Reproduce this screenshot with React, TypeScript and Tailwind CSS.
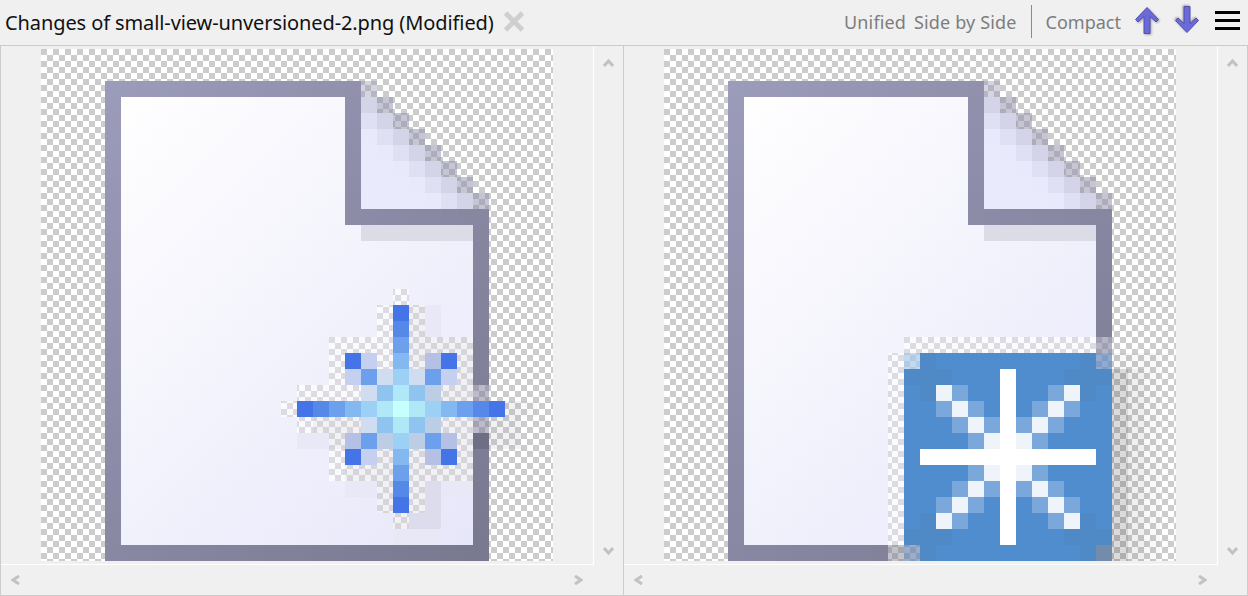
import { FC } from 'react'

type Cell = { x: number; y: number; fill: string }

const mix = (from: number[], to: number[], t: number) =>
  `rgb(${from.map((v, i) => Math.round(v + (to[i] - v) * t)).join(',')})`

// fold pixels next to the diagonal edge of the page
const foldEdge = ['#d3d4e8', '#dfe0f3']

const pageCells = () => {
  const cells: Cell[] = []
  for (let y = 2; y < 32; y++) {
    for (let x = 4; x < 28; x++) {
      const t = (x - 4 + (y - 2)) / 53
      const border = mix([155, 155, 186], [120, 120, 143], t)
      const body = mix([255, 255, 255], [230, 230, 250], t)
      if (y < 10 && x > 19) {
        const d = x - 20 - (y - 3)
        if (d === 1) cells.push({ x, y, fill: y === 2 ? 'rgba(150,150,180,.4)' : 'rgba(140,140,170,.5)' })
        else if (d === 0) cells.push({ x, y, fill: foldEdge[0] })
        else if (d === -1) cells.push({ x, y, fill: foldEdge[1] })
        else if (d === -2) cells.push({ x, y, fill: '#e8eafc' })
        else if (d < -2) cells.push({ x, y, fill: '#e9ebfd' })
        continue
      }
      if (y === 2 && x > 19) continue
      const isBorder =
        y === 2 || y === 31 || x === 4 || (x === 19 && y < 10) || (y === 10 && x >= 19) || (x === 27 && y >= 10)
      if (isBorder) cells.push({ x, y, fill: border })
      else if (y === 11 && x > 19) cells.push({ x, y, fill: '#dcdce6' })
      else cells.push({ x, y, fill: body })
    }
  }
  return cells
}

const HALO = 'rgba(245,245,255,.4)'
const HALO_DARK = 'rgba(225,225,235,.45)'
const SHADOW_DARK = 'rgba(0,0,0,.14)'
const SHADOW_MID = 'rgba(0,0,0,.06)'
const SHADOW_FAINT = 'rgba(0,0,0,.025)'

const sparklePalette: Record<string, string> = {
  a: '#c8ffff',
  b: '#b0e8f8',
  c: '#9cd0f4',
  d: '#84b8f0',
  e: '#6ca0ec',
  f: '#5688e8',
  g: '#4474e8',
  k: '#90c4f0',
  l: '#c5d0f0',
  L: '#b4c0e4',
  m: '#d0dcf0',
  M: '#bccde6',
  h: HALO,
  s: HALO_DARK,
  t: '#e8e8f6',
  T: '#dcdcec',
  D: 'rgba(120,120,150,.5)',
  B: '#6e6e86',
  u: 'rgba(170,170,185,.15)',
  v: 'rgba(170,170,185,.07)',
}

// cols 15-30, rows 15-30
const sparkleRows = [
  '.......h........',
  '......hgst......',
  '......hfst......',
  '...hhhhessss....',
  '...hglhdsLgs....',
  '...hlemcmels....',
  '.hhhhmkbkMssD...',
  'hgfedcbabcdefguv',
  '.hsssmkbkMssDuu.',
  '.ttsLeMcMeLsBuu.',
  '...hglsdsLgs....',
  '...hsssessss....',
  '....ttsfsTtt....',
  '......sgsT......',
  '.......sTT......',
  '.......ttt......',
]

const badgePalette: Record<string, string> = {
  n: '#508dce',
  o: '#4f89c6',
  w: '#ffffff',
  x: '#eef4fa',
  y: '#7aa8da',
  h: HALO,
  A: 'rgba(170,200,235,.7)',
  C: 'rgba(95,135,190,.7)',
  E: 'rgba(100,130,175,.65)',
  F: '#748cab',
  H: 'rgba(120,120,140,.45)',
  Q: 'rgba(130,130,160,.6)',
  S: SHADOW_DARK,
  R: SHADOW_MID,
  v: SHADOW_FAINT,
}

// cols 14-30, rows 18-31
const badgeRows = [
  '.hhhhhhhhhhhhQ...',
  'hAonnnnnnnnnoCvvv',
  'hooonnnwnnnoooSRv',
  'hnoxynnwnnyxonSRv',
  'hnnyxynwnyxynnSRv',
  'hnnnyxywyxynnnSRv',
  'hnnnnyxwxynnnnSRv',
  'hnwwwwwwwwwwwnSRv',
  'hnnnnyxwxynnnnSRv',
  'hnnnyxywyxynnnSRv',
  'hnnyxynwnyxynnSRv',
  'hnoxynnwnnyxonSRv',
  'hooonnnwnnnoooSRv',
  'HEonnnnnnnnnoFSRv',
]

const overlayCells = (rows: string[], palette: Record<string, string>, left: number, top: number) => {
  const cells: Cell[] = []
  rows.forEach((row, r) => {
    row.split('').forEach((ch, c) => {
      if (ch !== '.') cells.push({ x: left + c, y: top + r, fill: palette[ch] })
    })
  })
  return cells
}

const PixelIcon: FC<{ overlay: Cell[] }> = ({ overlay }) => {
  // overlay pixels replace the page pixels, so the checker shows through the halo
  const covered = new Set(overlay.map((c) => `${c.x}:${c.y}`))
  const cells = [...pageCells().filter((c) => !covered.has(`${c.x}:${c.y}`)), ...overlay]

  return (
    <div className="w-[512px] h-[512px] bg-[conic-gradient(#fff_25%,#ccc_0_50%,#fff_0_75%,#ccc_0)] bg-[length:12px_12px]">
      <svg width="512" height="512" viewBox="0 0 32 32" shapeRendering="crispEdges" className="block">
        {cells.map((c) => (
          <rect key={`${c.x}:${c.y}`} x={c.x} y={c.y} width="1" height="1" fill={c.fill} />
        ))}
      </svg>
    </div>
  )
}

const Chevron: FC<{ points: string; wide?: boolean }> = ({ points, wide }) => (
  <svg
    width={wide ? 11 : 9}
    height={wide ? 9 : 10}
    viewBox={wide ? '0 0 11 9' : '0 0 9 10'}
    fill="none"
    stroke="#c2c2c2"
    strokeWidth="3"
    className="block"
  >
    <polyline points={points} />
  </svg>
)

const Pane: FC<{ overlay: Cell[]; contentClass: string }> = ({ overlay, contentClass }) => (
  <div className="flex">
    <div className={contentClass}>
      <div className="h-[519px] pl-10 pt-[3px] border-r border-b border-white">
        <PixelIcon overlay={overlay} />
      </div>
      <div className="h-[30px] pl-[10px] pr-[11px] pt-[10px] flex justify-between items-start">
        <Chevron points="8,1 2,5 8,9" />
        <Chevron points="1,1 7,5 1,9" />
      </div>
    </div>
    <div className="w-[29px] h-[520px] pt-3 pb-[10px] flex flex-col justify-between items-center">
      <Chevron wide points="1,8 5.5,3 10,8" />
      <Chevron wide points="1,1 5.5,6 10,1" />
    </div>
  </div>
)

const Arrow: FC<{ down?: boolean }> = ({ down }) => (
  <svg
    width="24"
    height="28"
    viewBox="0 0 24 28"
    className={`block drop-shadow-[1px_1px_1px_rgba(0,0,0,0.3)] ${down ? 'rotate-180 -translate-y-[2px]' : ''}`}
  >
    <polygon
      points="12,.5 23.5,12.5 21,15 15,9.5 15,26.5 9,26.5 9,9.5 3,15 .5,12.5"
      fill="#6a6ad8"
      stroke="#4f4fb0"
      strokeWidth="1"
    />
  </svg>
)

export default function App() {
  const sparkle = overlayCells(sparkleRows, sparklePalette, 15, 15)
  const badge = overlayCells(badgeRows, badgePalette, 14, 18)

  return (
    <div className="w-[1248px] h-[596px] overflow-hidden flex flex-col bg-[#f0f0f0] font-['Noto_Sans',sans-serif]">
      <header className="h-[45px] shrink-0 flex items-center justify-between pl-[5px] pr-2">
        <div className="flex items-center gap-[10px]">
          <span className="text-[20px] tracking-[-0.1px] leading-none text-[#111] whitespace-nowrap">
            Changes of small-view-unversioned-2.png (Modified)
          </span>
          <svg width="20" height="21" viewBox="0 0 20 21" stroke="#cfcfcf" strokeWidth="5" className="block mb-[2px]">
            <path d="M1.5 2 18.5 19M18.5 2 1.5 19" />
          </svg>
        </div>
        <div className="flex items-center pb-[2px] text-[18px] leading-none text-[#7d7d7d] whitespace-nowrap">
          <span className="tracking-[0.15px]">Unified</span>
          <span className="ml-2 tracking-[0.15px]">Side by Side</span>
          <span className="w-px h-[33px] bg-[#8a8a8a] mx-[14px]" />
          <span>Compact</span>
          <div className="ml-[14px] mb-[2px] flex items-center gap-4">
            <Arrow />
            <Arrow down />
          </div>
          <div className="ml-4 mb-[2px] flex flex-col gap-[5px] w-[25px]">
            <span className="block h-[3px] bg-black" />
            <span className="block h-[3px] bg-black" />
            <span className="block h-[3px] bg-black" />
          </div>
        </div>
      </header>
      <main className="flex-1 flex border-t border-b border-l border-r border-[#cccccc]">
        <Pane overlay={sparkle} contentClass="w-[593px] shrink-0" />
        <div className="w-px bg-[#cccccc]" />
        <Pane overlay={badge} contentClass="w-[594px] shrink-0" />
      </main>
    </div>
  )
}
